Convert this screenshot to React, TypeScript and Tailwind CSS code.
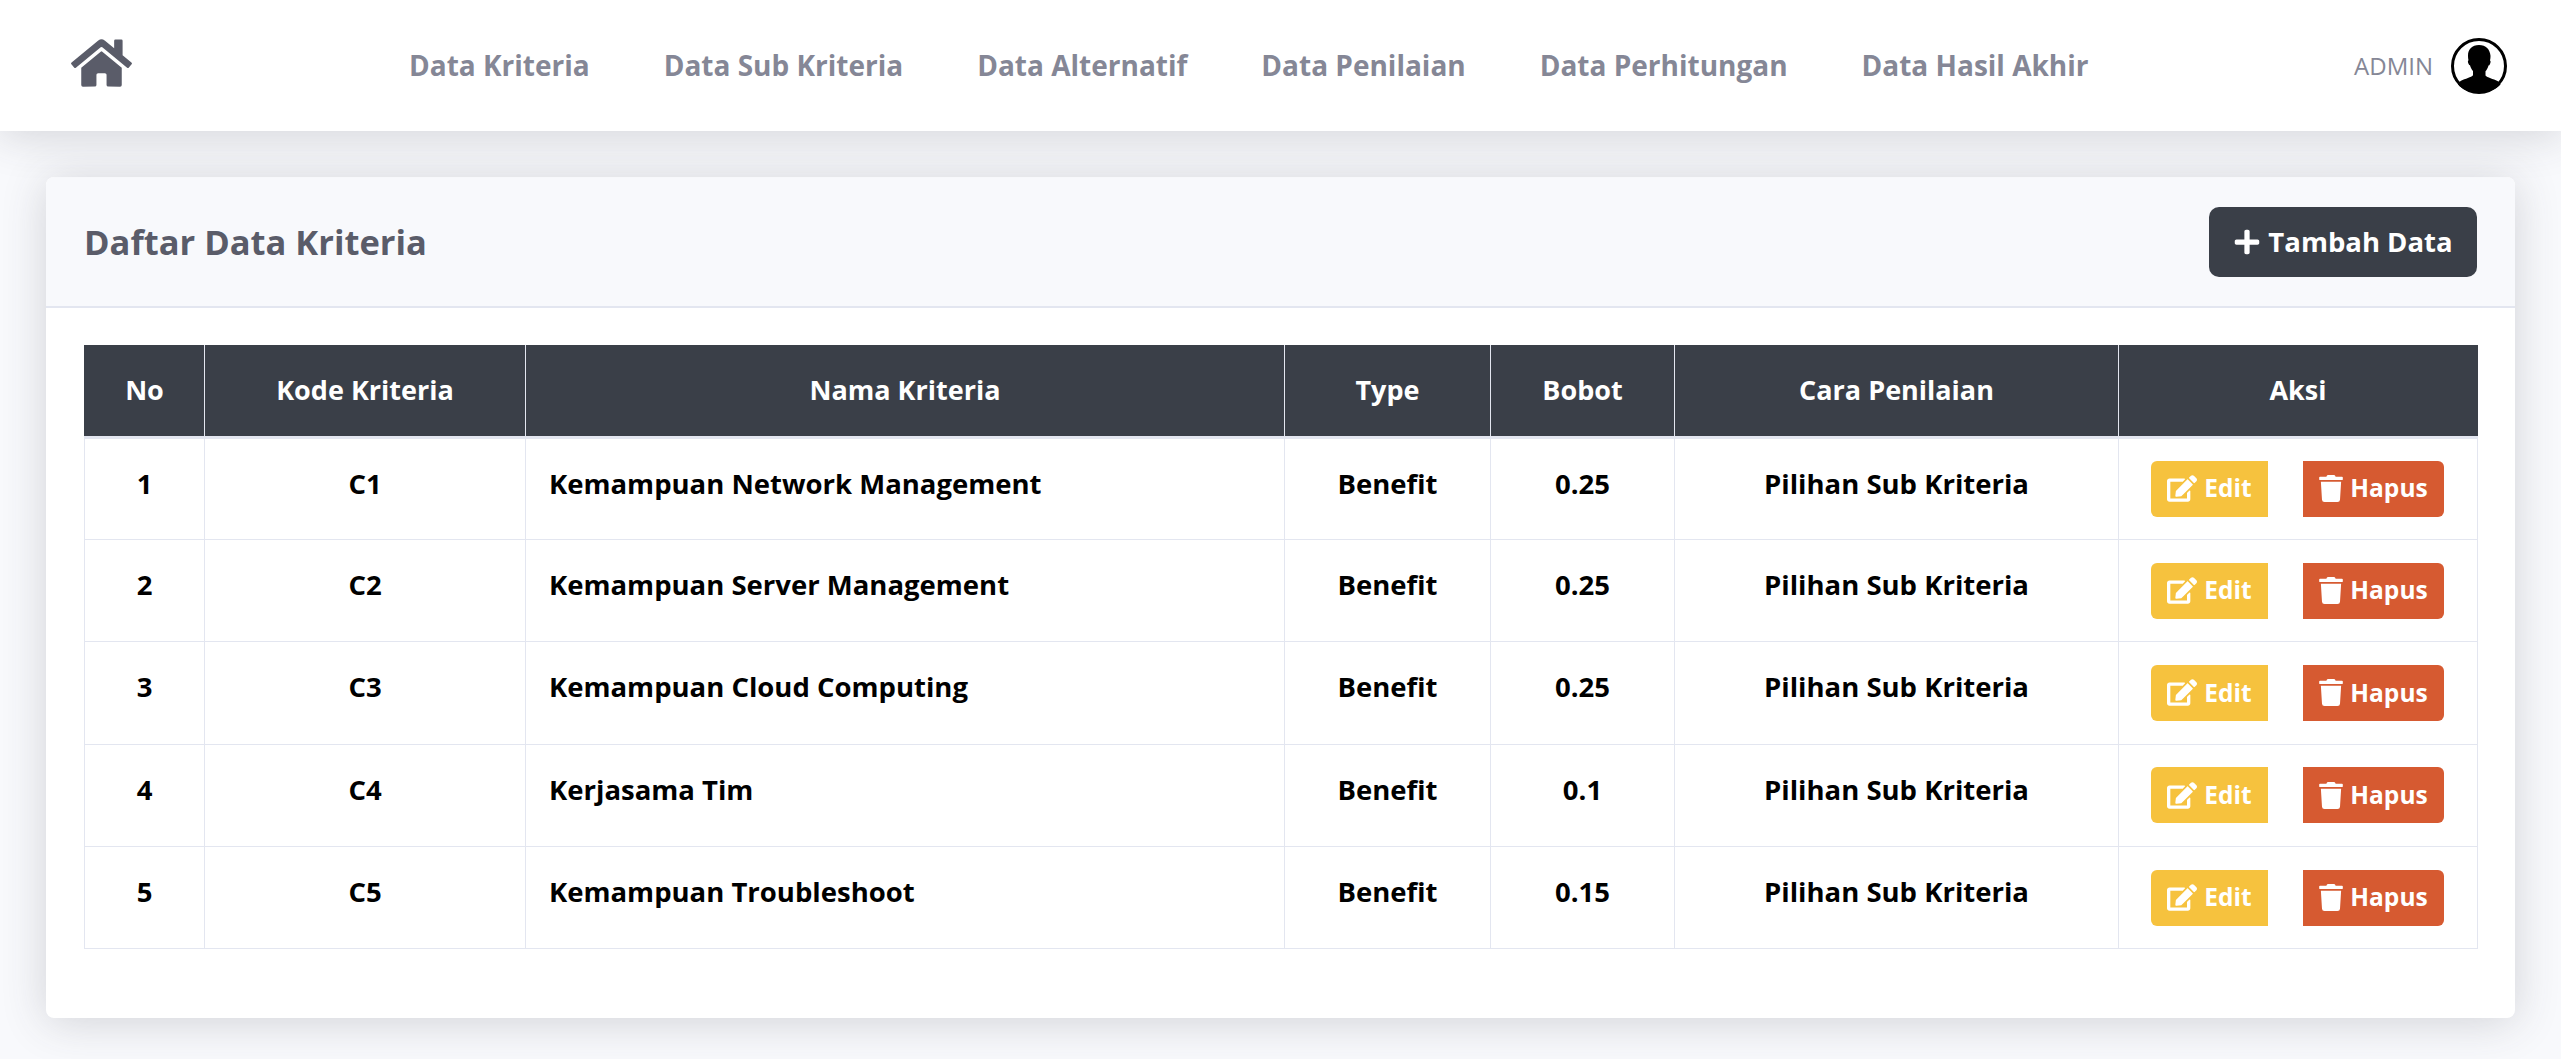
import { FaEdit, FaHome, FaPlus, FaTrash } from "react-icons/fa";

const navItems = [
  "Data Kriteria",
  "Data Sub Kriteria",
  "Data Alternatif",
  "Data Penilaian",
  "Data Perhitungan",
  "Data Hasil Akhir",
];

const headers = [
  { label: "No", width: "w-[120px]" },
  { label: "Kode Kriteria", width: "w-[321px]" },
  { label: "Nama Kriteria", width: "w-[759px]" },
  { label: "Type", width: "w-[206px]" },
  { label: "Bobot", width: "w-[184px]" },
  { label: "Cara Penilaian", width: "w-[444px]" },
  { label: "Aksi", width: "w-[359px]" },
];

const rows = [
  { no: 1, kode: "C1", nama: "Kemampuan Network Management", bobot: "0.25" },
  { no: 2, kode: "C2", nama: "Kemampuan Server Management", bobot: "0.25" },
  { no: 3, kode: "C3", nama: "Kemampuan Cloud Computing", bobot: "0.25" },
  { no: 4, kode: "C4", nama: "Kerjasama Tim", bobot: "0.1" },
  { no: 5, kode: "C5", nama: "Kemampuan Troubleshoot", bobot: "0.15" },
];

function Avatar() {
  return (
    <svg viewBox="0 0 56 56" className="w-[56px] h-[56px]">
      <circle cx="28" cy="28" r="26.5" fill="#fff" stroke="#000" strokeWidth="3" />
      <path
        d="M28 7c-7 0-11 4.500-11 10.500 0 2 .2 3.500.5 4.800-.8.3-.8 2 0 3.500.4 1 .9 1.500 1.500 1.500.6 2.500 1.800 4.500 3 5.700v4.300c-1.500 2-8 3.500-12 5.500-1.500.8-2.500 2-3 3.500C11 51.800 19 54.500 28 54.500s17-2.700 21.500-8c-.5-1.500-1.500-2.700-3-3.500-4-2-10.500-3.500-12-5.500v-4.300c1.200-1.200 2.400-3.200 3-5.700.6 0 1.100-.5 1.500-1.500.8-1.500.8-3.200 0-3.500.3-1.300.5-2.800.5-4.800C39 11.500 35 7 28 7z"
        fill="#000"
      />
    </svg>
  );
}

function App() {
  return (
    <div className="min-h-[1059px] bg-[#f8f9fc] font-['Open_Sans','Noto_Sans',sans-serif]">
      <nav className="h-[131px] bg-white flex items-center shadow-[0_4px_45px_0_rgba(58,59,69,0.2)] relative">
        <FaHome className="ml-[71px] mb-[6px] w-[61px] h-[54px] text-[#5a5c69]" />
        <ul className="flex gap-[74px] ml-[277px] mb-[2px] text-[28px] font-bold text-[#858796]">
          {navItems.map((item) => (
            <li key={item}>{item}</li>
          ))}
        </ul>
        <div className="ml-auto mr-[54px] flex items-center gap-[18px]">
          <span className="text-[24px] text-[#858796]">ADMIN</span>
          <Avatar />
        </div>
      </nav>

      <main className="px-[46px] pt-[46px] pb-[40px]">
        <section className="bg-white rounded-[8px] overflow-hidden shadow-[0_4px_45px_0_rgba(58,59,69,0.2)]">
          <header className="h-[131px] bg-[#f8f9fc] border-b-2 border-[#e3e6f0] flex items-center justify-between px-[38px] rounded-t-[8px]">
            <h1 className="text-[34.5px] font-bold text-[#5a5c69]">Daftar Data Kriteria</h1>
            <button className="w-[268px] h-[70px] rounded-[10px] bg-[#3a3f48] text-white text-[27.5px] font-bold flex items-center justify-center gap-[7px]">
              <FaPlus className="w-[28px] h-[28px]" />
              Tambah Data
            </button>
          </header>

          <div className="px-[38px] pt-[37px] pb-[69px]">
            <table className="w-[2393px] table-fixed border-collapse">
              <thead>
                <tr className="bg-[#3a3f48] text-white h-[92px]">
                  {headers.map((h) => (
                    <th
                      key={h.label}
                      className={`${h.width} border-x border-x-[#e3e6f0] border-b-[3px] border-b-[#e3e6f0] text-[27px] font-bold text-center first:border-l-[#3a3f48] last:border-r-[#3a3f48]`}
                    >
                      {h.label}
                    </th>
                  ))}
                </tr>
              </thead>
              <tbody className="text-[27.5px] font-bold text-black">
                {rows.map((row) => (
                  <tr key={row.no} className="h-[102.4px]">
                    <td className="border border-[#e3e6f0] text-center align-top pt-[24px]">{row.no}</td>
                    <td className="border border-[#e3e6f0] text-center align-top pt-[24px]">{row.kode}</td>
                    <td className="border border-[#e3e6f0] pl-[23px] align-top pt-[24px]">{row.nama}</td>
                    <td className="border border-[#e3e6f0] text-center align-top pt-[24px]">Benefit</td>
                    <td className="border border-[#e3e6f0] text-center align-top pt-[24px]">{row.bobot}</td>
                    <td className="border border-[#e3e6f0] text-center align-top pt-[24px]">Pilihan Sub Kriteria</td>
                    <td className="border border-[#e3e6f0] align-middle">
                      <div className="flex justify-between pl-[32px] pr-[33px]">
                        <button className="w-[117px] h-[56px] rounded-l-[6px] bg-[#f6c23e] text-white text-[24.5px] font-bold flex items-center justify-center gap-[7px]">
                          <FaEdit className="w-[30px] h-[27px]" />
                          Edit
                        </button>
                        <button className="w-[141px] h-[56px] rounded-r-[6px] bg-[#d65a31] text-white text-[24.5px] font-bold flex items-center justify-center gap-[7px]">
                          <FaTrash className="w-[24px] h-[27px]" />
                          Hapus
                        </button>
                      </div>
                    </td>
                  </tr>
                ))}
              </tbody>
            </table>
          </div>
        </section>
      </main>
    </div>
  );
}

export default App;
